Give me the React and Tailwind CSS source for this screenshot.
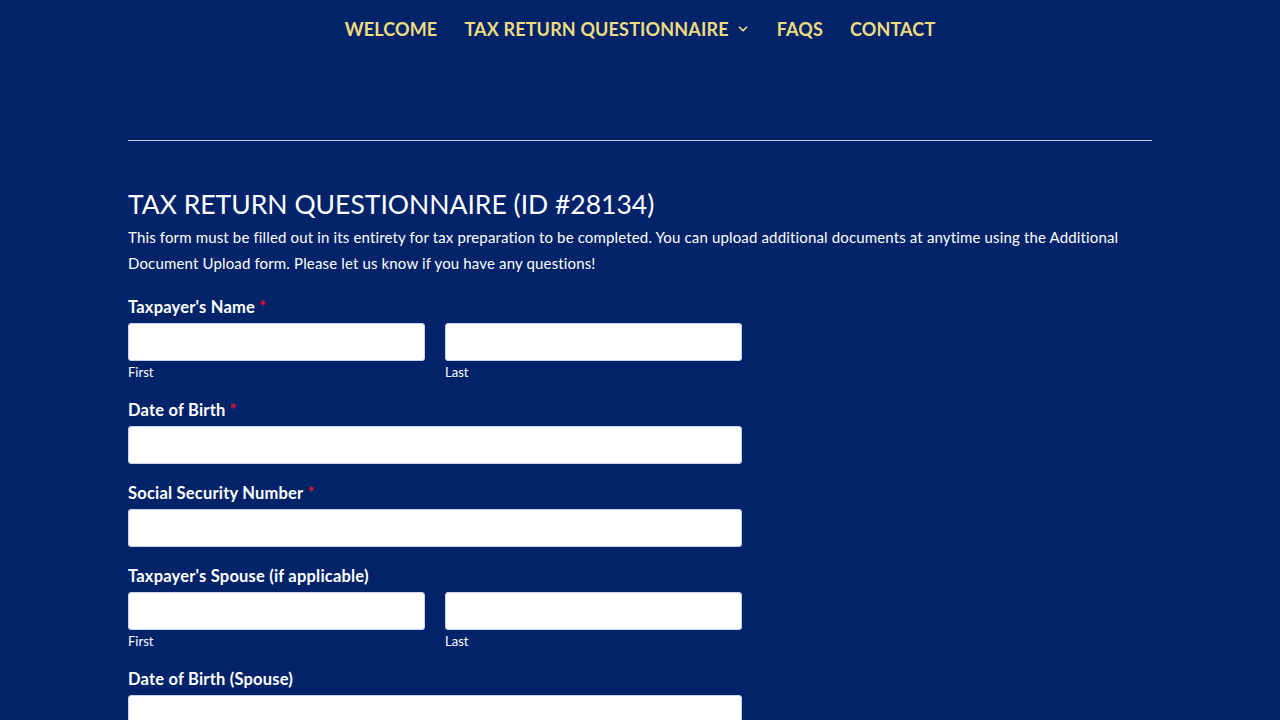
import { ChevronDown } from "lucide-react";

const navItems = [
  { label: "WELCOME" },
  { label: "TAX RETURN QUESTIONNAIRE", dropdown: true },
  { label: "FAQS" },
  { label: "CONTACT" },
];

function Label({ children, required }) {
  return (
    <label className="block text-[16.5px] font-bold text-white leading-[20px] mb-[6px] tracking-[0.2px]">
      {children}
      {required && <span className="text-[#e0102f] ml-1">*</span>}
    </label>
  );
}

function Input({ className = "" }) {
  return (
    <input
      type="text"
      className={`h-[38px] bg-white rounded-[3px] border border-[#c9d4e8] outline-none px-3 text-[15px] text-gray-800 ${className}`}
    />
  );
}

function NameField({ label, required }) {
  return (
    <div className="mb-[20px]">
      <Label required={required}>{label}</Label>
      <div className="flex gap-[20px]">
        <div className="w-[297px]">
          <Input className="w-full" />
          <div className="text-[13px] text-white leading-[16px] mt-[3px]">First</div>
        </div>
        <div className="w-[297px]">
          <Input className="w-full" />
          <div className="text-[13px] text-white leading-[16px] mt-[3px]">Last</div>
        </div>
      </div>
    </div>
  );
}

function SingleField({ label, required }) {
  return (
    <div className="mb-[19px]">
      <Label required={required}>{label}</Label>
      <Input className="w-[614px]" />
    </div>
  );
}

export default function App() {
  return (
    <div className="min-h-screen bg-[#012369] font-['Lato',sans-serif] overflow-hidden h-[720px]">
      <nav className="flex justify-center items-center gap-[27px] pt-[18px] h-[58px] pb-[18px]">
        {navItems.map((item) => (
          <a
            key={item.label}
            className="flex items-center text-[18px] font-bold text-[#f0dc80] tracking-[0.15px]"
          >
            {item.label}
            {item.dropdown && <ChevronDown size={14} strokeWidth={3} className="ml-[7px]" />}
          </a>
        ))}
      </nav>

      <main className="w-[1024px] mx-auto">
        <hr className="mt-[82px] border-0 border-t border-[#c9d0de]" />

        <h1 className="mt-[46px] text-[26.5px] text-white leading-[34px]">
          TAX RETURN QUESTIONNAIRE (ID #28134)
        </h1>
        <p className="mt-[3px] text-[15px] text-white leading-[26px] pr-[30px] tracking-[0.15px]">
          This form must be filled out in its entirety for tax preparation to be completed. You can upload additional documents at anytime using the Additional Document Upload form. Please let us know if you have any questions!
        </p>

        <form className="mt-[21px]">
          <NameField label="Taxpayer's Name" required />
          <SingleField label="Date of Birth" required />
          <SingleField label="Social Security Number" required />
          <NameField label="Taxpayer's Spouse (if applicable)" />
          <SingleField label="Date of Birth (Spouse)" />
        </form>
      </main>
    </div>
  );
}
